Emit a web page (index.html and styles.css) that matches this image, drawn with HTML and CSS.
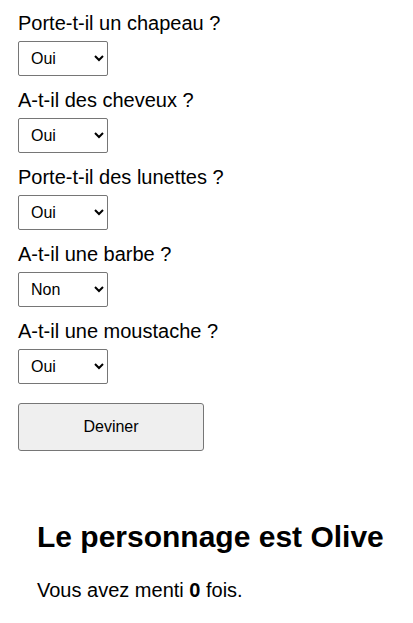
FILE: index.html
```html
<!DOCTYPE html>
<html lang="fr">
<head>
<meta charset="utf-8">
<title>Devine qui</title>
<link rel="stylesheet" href="styles.css">
</head>
<body>
<form class="quiz">
  <div class="question">
    <label class="q-label" for="q1">Porte-t-il un chapeau ?</label>
    <select class="q-select" id="q1"><option>Oui</option><option>Non</option></select>
  </div>
  <div class="question">
    <label class="q-label" for="q2">A-t-il des cheveux ?</label>
    <select class="q-select" id="q2"><option>Oui</option><option>Non</option></select>
  </div>
  <div class="question">
    <label class="q-label" for="q3">Porte-t-il des lunettes ?</label>
    <select class="q-select" id="q3"><option>Oui</option><option>Non</option></select>
  </div>
  <div class="question">
    <label class="q-label" for="q4">A-t-il une barbe ?</label>
    <select class="q-select" id="q4"><option>Non</option><option>Oui</option></select>
  </div>
  <div class="question">
    <label class="q-label" for="q5">A-t-il une moustache ?</label>
    <select class="q-select" id="q5"><option>Oui</option><option>Non</option></select>
  </div>
  <button type="button" class="guess">Deviner</button>
</form>
<section class="result">
  <h1 class="result-title">Le personnage est Olive</h1>
  <p class="result-text">Vous avez menti <strong>0</strong> fois.</p>
</section>
</body>
</html>
```

FILE: styles.css
```css
html, body {
  margin: 0;
  padding: 0;
  background: #ffffff;
}
body {
  font-family: "Liberation Sans", Arial, sans-serif;
  color: #000;
}
.quiz {
  display: flex;
  flex-direction: column;
  padding: 12px 18px 0;
  gap: 13px;
}
.question {
  display: flex;
  flex-direction: column;
  align-items: flex-start;
  gap: 6px;
}
.q-label {
  font-size: 20px;
  line-height: 23px;
}
.q-select {
  width: 90px;
  height: 35px;
  font-family: "Liberation Sans", Arial, sans-serif;
  font-size: 16px;
  padding: 0 4px 0 8px;
  border: 1px solid #767676;
  border-radius: 2px;
  background: #fff;
  color: #000;
  margin: 0;
}
.guess {
  margin-top: 6px;
  width: 186px;
  height: 48px;
  font-family: "Liberation Sans", Arial, sans-serif;
  font-size: 16px;
  background: #efefef;
  border: 1px solid #767676;
  border-radius: 3px;
  color: #000;
  align-self: flex-start;
}
.result {
  padding: 0 0 0 37px;
  margin-top: 69px;
}
.result-title {
  font-size: 30px;
  line-height: 34px;
  font-weight: bold;
  margin: 0;
  white-space: nowrap;
}
.result-text {
  font-size: 20px;
  line-height: 23px;
  margin: 25px 0 0;
}
```
